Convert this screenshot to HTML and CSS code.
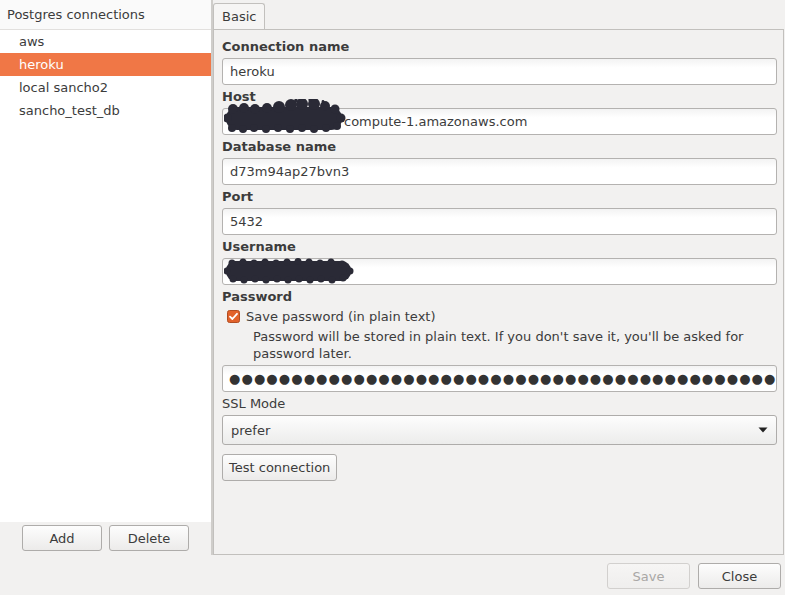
FILE: index.html
```html
<!DOCTYPE html>
<html>
<head>
<meta charset="utf-8">
<link rel="stylesheet" href="styles.css">
</head>
<body>
<div class="window">
  <div class="main">
    <aside class="sidebar">
      <div class="list">
        <div class="list-header">Postgres connections</div>
        <ul class="items">
          <li class="item">aws</li>
          <li class="item selected">heroku</li>
          <li class="item">local sancho2</li>
          <li class="item">sancho_test_db</li>
        </ul>
      </div>
      <div class="side-buttons">
        <button class="btn btn-side">Add</button>
        <button class="btn btn-side">Delete</button>
      </div>
    </aside>
    <div class="splitter"></div>
    <section class="content">
      <div class="tabs"><div class="tab">Basic</div></div>
      <div class="notebook">
        <div class="label bold">Connection name</div>
        <div class="input">heroku</div>

        <div class="label bold">Host</div>
        <div class="input">
          <svg class="blob blob-host" width="122" height="34" viewBox="0 0 122 34">
            <g fill="#2a2a36">
              <rect x="2" y="8" width="116" height="23" rx="11"/>
              <circle cx="9" cy="10" r="5"/><circle cx="20" cy="9" r="5"/><circle cx="31" cy="10" r="5"/>
              <circle cx="43" cy="9" r="5"/><circle cx="55" cy="8" r="6"/><circle cx="67" cy="6" r="6"/>
              <circle cx="78" cy="5" r="6"/><circle cx="90" cy="5" r="6"/><circle cx="101" cy="7" r="5"/>
              <circle cx="111" cy="10" r="4.5"/>
              <circle cx="8" cy="29" r="4"/><circle cx="19" cy="30" r="4"/><circle cx="30" cy="29" r="4"/>
              <circle cx="42" cy="30" r="4"/><circle cx="54" cy="29" r="4"/><circle cx="66" cy="30" r="4"/>
              <circle cx="78" cy="29" r="4"/><circle cx="90" cy="30" r="4"/><circle cx="102" cy="29" r="4"/>
              <circle cx="113" cy="27" r="4"/>
              <circle cx="3.5" cy="19" r="4.5"/><circle cx="117" cy="19" r="4.5"/>
              <circle cx="72" cy="1.5" r="1.8"/><circle cx="86" cy="1" r="1.6"/><circle cx="99" cy="2.5" r="1.4"/>
            </g>
          </svg>
          <span class="host-text">compute-1.amazonaws.com</span>
        </div>

        <div class="label bold">Database name</div>
        <div class="input">d73m94ap27bvn3</div>

        <div class="label bold">Port</div>
        <div class="input">5432</div>

        <div class="label bold">Username</div>
        <div class="input">
          <svg class="blob blob-user" width="130" height="26" viewBox="0 0 130 26">
            <g fill="#2a2a36">
              <rect x="2" y="3" width="125" height="20" rx="9"/>
              <circle cx="8" cy="5" r="3.5"/><circle cx="19" cy="4" r="3.5"/><circle cx="30" cy="5" r="3.5"/>
              <circle cx="41" cy="4" r="3.5"/><circle cx="52" cy="5" r="3.5"/><circle cx="63" cy="4" r="3.5"/>
              <circle cx="74" cy="3.5" r="3.5"/><circle cx="85" cy="4" r="3.5"/><circle cx="96" cy="5" r="3.5"/>
              <circle cx="107" cy="4" r="3.5"/><circle cx="118" cy="6" r="3.5"/>
              <circle cx="9" cy="21" r="3.5"/><circle cx="20" cy="22" r="3.5"/><circle cx="31" cy="21" r="3.5"/>
              <circle cx="42" cy="22" r="3.5"/><circle cx="53" cy="21" r="3.5"/><circle cx="64" cy="22" r="3.5"/>
              <circle cx="75" cy="21" r="3.5"/><circle cx="86" cy="22" r="3.5"/><circle cx="97" cy="21" r="3.5"/>
              <circle cx="108" cy="22" r="3.5"/><circle cx="119" cy="20" r="3.5"/>
              <circle cx="3" cy="13" r="3.5"/><circle cx="126" cy="13" r="3.5"/>
            </g>
          </svg>
        </div>

        <div class="label bold">Password</div>
        <div class="check-row">
          <svg class="checkbox" width="13" height="13" viewBox="0 0 13 13">
            <rect x="0.5" y="0.5" width="12" height="12" rx="2" fill="#e2622b" stroke="#b04d22"/>
            <path d="M3 6.6 L5.4 9 L10 3.8" fill="none" stroke="#ffffff" stroke-width="1.8" stroke-linecap="round" stroke-linejoin="round"/>
          </svg>
          <span>Save password (in plain text)</span>
        </div>
        <div class="help">Password will be stored in plain text. If you don't save it, you'll be asked for password later.</div>
        <div class="input password">●●●●●●●●●●●●●●●●●●●●●●●●●●●●●●●●●●●●●●●●●●●●</div>

        <div class="label">SSL Mode</div>
        <div class="select">
          <span>prefer</span>
          <svg class="arrow" width="10" height="6" viewBox="0 0 10 6"><path d="M0.5 0.5 H9.5 L5 5.5 Z" fill="#222"/></svg>
        </div>

        <div class="test-row"><button class="btn btn-test">Test connection</button></div>
      </div>
    </section>
  </div>
  <footer class="footer">
    <button class="btn btn-foot disabled">Save</button>
    <button class="btn btn-foot">Close</button>
  </footer>
</div>
</body>
</html>
```

FILE: styles.css
```css
* { box-sizing: border-box; }
html, body { margin: 0; padding: 0; }
body {
  width: 785px;
  height: 595px;
  overflow: hidden;
  background: #f2f1f0;
  font-family: "DejaVu Sans", "Liberation Sans", sans-serif;
  font-size: 13px;
  color: #3c3c3c;
}
.window { display: flex; flex-direction: column; height: 595px; }
.main { display: flex; height: 555px; flex: none; }

/* sidebar */
.sidebar { width: 211px; flex: none; display: flex; flex-direction: column; }
.list { background: #ffffff; height: 522px; }
.list-header {
  height: 30px;
  line-height: 30px;
  padding-left: 7px;
  background: #fafafa;
  border-bottom: 1px solid #e2e0de;
}
.items { list-style: none; margin: 0; padding: 0; }
.item { height: 23px; line-height: 23px; padding-left: 19px; }
.item.selected { background: #f07746; color: #ffffff; }
.side-buttons { display: flex; justify-content: center; gap: 7px; padding-top: 3px; }

.splitter { width: 2px; flex: none; background: #cfcdca; }

/* buttons */
.btn {
  font: inherit;
  color: #3c3c3c;
  border: 1px solid #aeacaa;
  border-radius: 3px;
  background: linear-gradient(#fdfdfd, #ecebea);
  padding: 0;
  margin: 0;
}
.btn-side { width: 80px; height: 26px; }
.btn-test { height: 27px; padding: 0 6px; }
.btn-foot { width: 83px; height: 26px; }
.btn.disabled { color: #a9a7a5; border-color: #d2d0ce; background: linear-gradient(#f6f5f4, #efeeed); }

/* content */
.content { flex: 1; min-width: 0; display: flex; flex-direction: column; margin-right: 1px; }
.tabs { height: 29px; display: flex; align-items: flex-end; }
.tab {
  height: 26px;
  line-height: 25px;
  padding: 0 8px;
  border: 1px solid #c2c0bd;
  border-bottom: none;
  border-radius: 3px 3px 0 0;
  background: #f6f5f4;
}
.notebook {
  flex: 1;
  border: 1px solid #c2c0bd;
  padding: 5px 6px 0 8px;
}
.label { height: 23px; padding-top: 3px; line-height: 17px; }
.bold { font-weight: bold; }
.input {
  position: relative;
  height: 27px;
  line-height: 25px;
  padding: 0 7px;
  border: 1px solid #b4b2b0;
  border-radius: 3px;
  background: linear-gradient(#f3f3f3, #ffffff 35%);
  white-space: nowrap;
}
.host-text { padding-left: 114px; }
.blob { position: absolute; display: block; }
.blob-host { left: 1px; top: -10px; }
.blob-user { left: 1px; top: -1px; }
.check-row { display: flex; align-items: center; gap: 6px; height: 17px; padding-left: 5px; line-height: 17px; }
.checkbox { display: block; flex: none; }
.help { padding-left: 31px; line-height: 17px; margin-top: 3px; margin-bottom: 3px; padding-right: 24px; }
.password { font-size: 13px; letter-spacing: 1.1px; color: #333333; padding: 0 2px 0 6px; overflow: hidden; }
.select {
  height: 30px;
  display: flex;
  align-items: center;
  justify-content: space-between;
  padding: 0 8px;
  border: 1px solid #aeacaa;
  border-radius: 3px;
  background: linear-gradient(#fdfdfd, #ececeb);
}
.arrow { display: block; }
.test-row { padding-top: 9px; display: flex; }

/* footer */
.footer { flex: 1; display: flex; justify-content: flex-end; gap: 8px; padding: 8px 4px 0 0; }
```
